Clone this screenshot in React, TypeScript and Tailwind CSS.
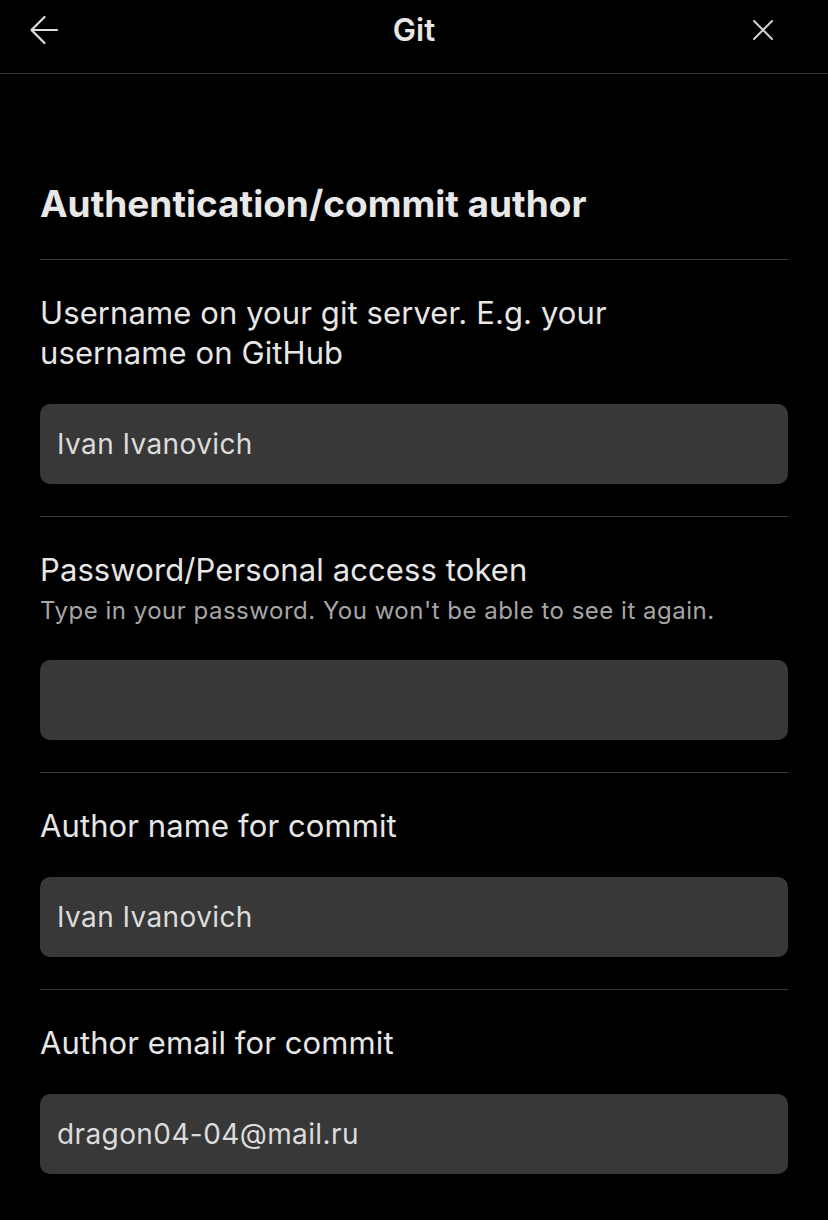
import { useState } from "react";

function Field({
  label,
  hint,
  value,
  onChange,
  type = "text",
}: {
  label: React.ReactNode;
  hint?: string;
  value: string;
  onChange: (v: string) => void;
  type?: string;
}) {
  return (
    <div className="border-t border-[#3a3a3a] pt-[33px] pb-[32px]">
      <label className="block text-[31px] leading-[40px] tracking-[0.1px] text-[#e6e6e6]">{label}</label>
      {hint && (
        <p className="mt-[6px] text-[24px] leading-[30px] tracking-[0.5px] text-[#a6a6a6]">{hint}</p>
      )}
      <input
        type={type}
        value={value}
        onChange={(e) => onChange(e.target.value)}
        className={`${hint ? "mt-[34px]" : "mt-[31px]"} block h-[80px] w-full rounded-[10px] bg-[#383838] px-[17px] text-[28px] tracking-[0.4px] text-[#dcdcdc] outline-none`}
      />
    </div>
  );
}

export default function App() {
  const [username, setUsername] = useState("Ivan Ivanovich");
  const [password, setPassword] = useState("");
  const [authorName, setAuthorName] = useState("Ivan Ivanovich");
  const [authorEmail, setAuthorEmail] = useState("dragon04-04@mail.ru");

  return (
    <div
      className="min-h-[1220px] w-[828px] bg-black text-[#e6e6e6]"
      style={{ fontFamily: "Inter, 'Noto Sans', sans-serif" }}
    >
      <header className="grid h-[74px] grid-cols-[1fr_auto_1fr] items-center border-b border-[#3a3a3a] pb-[13px]">
        <button className="ml-[29px] flex h-[30px] w-[30px] items-center justify-center justify-self-start text-[#dedede]">
          <svg width="30" height="30" viewBox="0 0 30 30" fill="none" stroke="currentColor" strokeWidth="2.2" strokeLinecap="round" strokeLinejoin="round">
            <path d="M28 15H3M15.5 2L2.5 15l13 13" />
          </svg>
        </button>
        <h1 className="text-[31px] font-semibold leading-[40px] text-[#e6e6e6]">Git</h1>
        <button className="mr-[55px] flex h-[20px] w-[20px] items-center justify-center justify-self-end text-[#cfcfcf]">
          <svg width="20" height="20" viewBox="0 0 20 20" fill="none" stroke="currentColor" strokeWidth="2" strokeLinecap="round">
            <path d="M1 1l18 18M19 1L1 19" />
          </svg>
        </button>
      </header>

      <main className="px-[40px] pt-[108px]">
        <h2 className="pb-[33px] text-[37px] font-bold leading-[44px] text-[#e8e8e8]">
          Authentication/commit author
        </h2>
        <Field
          label={
            <>
              Username on your git server. E.g. your
              <br />
              username on GitHub
            </>
          }
          value={username}
          onChange={setUsername}
        />
        <Field
          label="Password/Personal access token"
          hint="Type in your password. You won't be able to see it again."
          value={password}
          onChange={setPassword}
          type="password"
        />
        <Field label="Author name for commit" value={authorName} onChange={setAuthorName} />
        <Field label="Author email for commit" value={authorEmail} onChange={setAuthorEmail} />
      </main>
    </div>
  );
}
